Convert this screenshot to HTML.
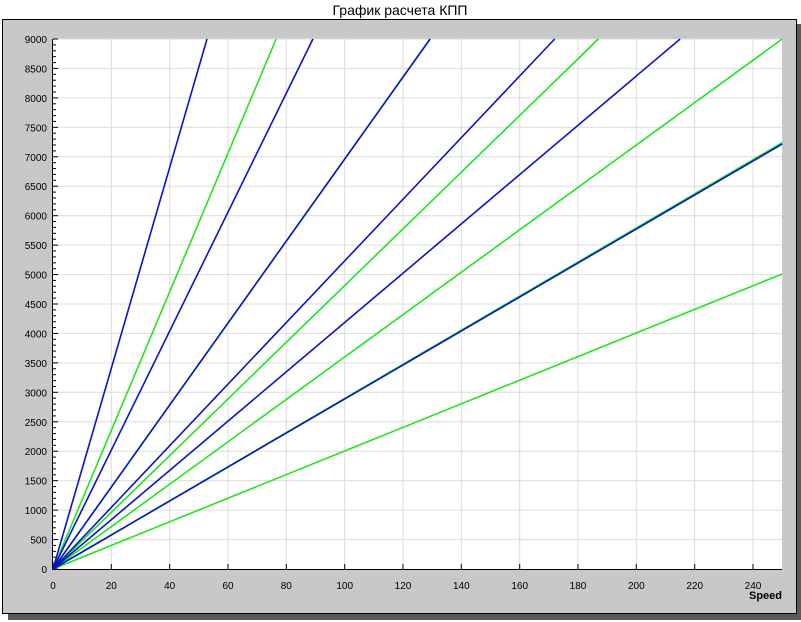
<!DOCTYPE html>
<html><head><meta charset="utf-8"><style>
html,body{margin:0;padding:0;background:#fff;width:801px;height:622px;overflow:hidden}
svg{display:block}
text{font-family:"Liberation Sans",sans-serif;font-size:10px;fill:#000}
</style></head><body>
<svg id="s" width="801" height="622" xmlns="http://www.w3.org/2000/svg">
<rect x="8" y="24" width="793" height="596" fill="#5a5a5a"/>
<rect x="2.5" y="19.5" width="794" height="594" fill="#c8c8c8" stroke="#000" stroke-width="1"/>
<rect x="53" y="39" width="729" height="530" fill="#fff"/>
<text x="400" y="15" text-anchor="middle" style="font-size:14px">График расчета КПП</text>
<g id="g"></g>
<text x="782" y="599" text-anchor="end" style="font-weight:bold;font-size:11px">Speed</text>
</svg>
<script>
var g=document.getElementById('g'),h='';
function X(s){return 53+s*2.91667}
function Y(r){return 569-r*530/9000}
for(var r=500;r<=9000;r+=500){var y=Y(r).toFixed(1);h+='<line x1="53" x2="782" y1="'+y+'" y2="'+y+'" stroke="#dcdcdc"/>';}
for(var s=20;s<=240;s+=20){var x=X(s).toFixed(1);h+='<line x1="'+x+'" x2="'+x+'" y1="39" y2="569" stroke="#dcdcdc"/>';}
for(var r=0;r<=9000;r+=100){var y=Y(r).toFixed(1);var L=(r%500==0)?5:3;h+='<line x1="53" x2="'+(53+L)+'" y1="'+y+'" y2="'+y+'" stroke="#000"/>';}
for(var r=0;r<=9000;r+=500){h+='<text x="47" y="'+(Y(r)+4).toFixed(1)+'" text-anchor="end">'+r+'</text>';}
for(var s=0;s<=240;s+=20){var x=X(s).toFixed(1);h+='<line x1="'+x+'" x2="'+x+'" y1="564" y2="569" stroke="#000"/><text x="'+x+'" y="589" text-anchor="middle">'+s+'</text>';}
h+='<line x1="52.5" x2="52.5" y1="39" y2="569" stroke="#000"/><line x1="52" x2="782" y1="569.5" y2="569.5" stroke="#000"/>';
var lines=[['#1ee61e',250,5009],['#1ee61e',250,9000],['#1ee61e',187,9000],['#1ee61e',129.3,9000],['#1ee61e',76.5,9000],['#1ee61e',250,7240],
['#0a14c8',52.8,9000],['#0a14c8',89.1,9000],['#0a14c8',129.3,9000],['#0a14c8',172,9000],['#0a14c8',215,9000],['#0a14c8',250,7217]];
lines.forEach(function(l){h+='<line x1="53" y1="569" x2="'+X(l[1]).toFixed(1)+'" y2="'+Y(l[2]).toFixed(1)+'" stroke="'+l[0]+'" stroke-width="1.6"/>';});
g.innerHTML=h;
</script>
</body></html>
